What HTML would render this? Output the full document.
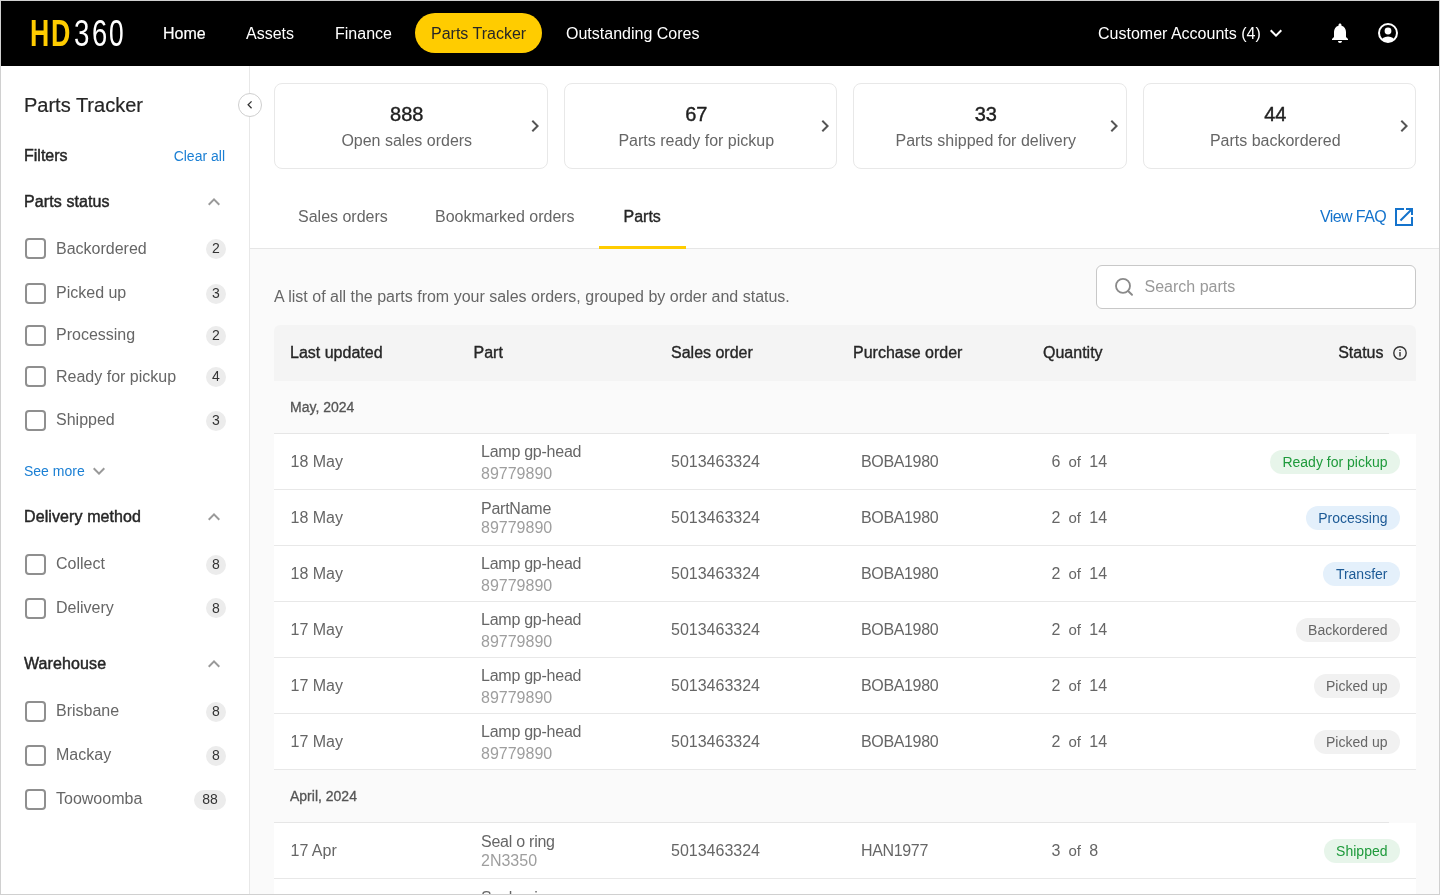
<!DOCTYPE html>
<html><head><meta charset="utf-8">
<style>
*{margin:0;padding:0;box-sizing:border-box}
html,body{width:1440px;height:895px;overflow:hidden;background:#fff}
body{font-family:"Liberation Sans", sans-serif;position:relative}
.a{position:absolute}
.t{position:absolute;white-space:nowrap;line-height:1}
#root{position:absolute;left:0;top:0;width:1440px;height:895px;will-change:transform}
.pill{position:absolute;right:40px;height:24px;line-height:24px;border-radius:12px;padding:0 12.5px;font-size:14px;white-space:nowrap}
</style></head><body><div id="root">
<div class="a" style="left:0px;top:0px;width:1440px;height:895px;background:#fff;"></div>
<div class="a" style="left:250px;top:249px;width:1190px;height:646px;background:#fafafa;"></div>
<div class="a" style="left:0px;top:0px;width:1440px;height:66px;background:#000;"></div>
<div class="a" style="left:249px;top:66px;width:1px;height:829px;background:#e8e8e8;"></div>
<div class="a" style="left:250px;top:248px;width:1190px;height:1px;background:#e6e6e6;"></div>
<div class="t" style="left:30.2px;top:16px;font-size:36px;font-weight:bold;color:#ffcc00;transform:scaleX(0.74);transform-origin:0 0">H</div>
<div class="t" style="left:51.4px;top:16px;font-size:36px;font-weight:bold;color:#ffcc00;transform:scaleX(0.745);transform-origin:0 0">D</div>
<div class="t" style="left:73.5px;top:16px;font-size:36px;font-weight:normal;color:#fff;transform:scaleX(0.77);transform-origin:0 0">3</div>
<div class="t" style="left:91.5px;top:16px;font-size:36px;font-weight:normal;color:#fff;transform:scaleX(0.76);transform-origin:0 0">6</div>
<div class="t" style="left:109px;top:16px;font-size:36px;font-weight:normal;color:#fff;transform:scaleX(0.73);transform-origin:0 0">0</div>
<div class="t" style="left:163px;top:26px;font-size:16px;color:#fff;-webkit-text-stroke:0.2px #fff;">Home</div>
<div class="t" style="left:246px;top:26px;font-size:16px;color:#fff;">Assets</div>
<div class="t" style="left:335px;top:26px;font-size:16px;color:#fff;">Finance</div>
<div class="a" style="left:415px;top:13px;width:127px;height:40px;background:#ffcc00;border-radius:20px;"></div>
<div class="t" style="left:431px;top:26px;font-size:16px;color:#262626;">Parts Tracker</div>
<div class="t" style="left:566px;top:26px;font-size:16px;color:#fff;">Outstanding Cores</div>
<div class="t" style="left:1098px;top:26px;font-size:16px;color:#fff;">Customer Accounts (4)</div>
<svg class="a" style="left:1264px;top:21px" width="24" height="24" viewBox="0 0 24 24"><path d="M7.41 8.59 12 13.17l4.59-4.58L18 10l-6 6-6-6z" fill="#fff"/></svg>
<svg class="a" style="left:1328px;top:21px" width="24" height="24" viewBox="0 0 24 24"><path fill="#fff" d="M12 22c1.1 0 2-.9 2-2h-4c0 1.1.89 2 2 2zm6-6v-5c0-3.07-1.64-5.64-4.5-6.32V4c0-.83-.67-1.5-1.5-1.5s-1.5.67-1.5 1.5v.68C7.63 5.36 6 7.92 6 11v5l-2 2v1h16v-1l-2-2z"/></svg>
<svg class="a" style="left:1376px;top:21px" width="24" height="24" viewBox="0 0 24 24"><defs><clipPath id="cc"><circle cx="12" cy="12" r="9"/></clipPath></defs><circle cx="12" cy="12" r="9" fill="none" stroke="#fff" stroke-width="2"/><circle cx="12" cy="10" r="3.4" fill="#fff"/><ellipse cx="12" cy="21" rx="7.2" ry="5.5" fill="#fff" clip-path="url(#cc)"/></svg>
<div class="t" style="left:24px;top:95px;font-size:20px;color:#262626;-webkit-text-stroke:0.2px #262626;">Parts Tracker</div>
<div class="t" style="left:24px;top:148px;font-size:16px;color:#262626;-webkit-text-stroke:0.45px #262626;">Filters</div>
<div class="t" style="right:1215px;top:149px;font-size:14px;color:#1a7fd4;">Clear all</div>
<div class="t" style="left:24px;top:194px;font-size:16px;color:#262626;-webkit-text-stroke:0.45px #262626;letter-spacing:0.1px;">Parts status</div>
<svg class="a" style="left:202px;top:189.9px" width="24" height="24" viewBox="0 0 24 24"><path d="M7.41 15.41 12 10.83l4.59 4.58L18 14l-6-6-6 6z" fill="#999"/></svg>
<div class="a" style="left:25px;top:238px;width:21px;height:21px;border:2px solid #8f8f8f;border-radius:4px;box-sizing:border-box;"></div>
<div class="t" style="left:56px;top:241px;font-size:16px;color:#666;">Backordered</div>
<div class="a" style="left:206px;top:238.5px;width:20px;height:20px;background:#ececec;border-radius:10px;"></div>
<div class="t" style="left:-84.0px;width:600px;text-align:center;top:241px;font-size:14px;color:#333;">2</div>
<div class="a" style="left:25px;top:283px;width:21px;height:21px;border:2px solid #8f8f8f;border-radius:4px;box-sizing:border-box;"></div>
<div class="t" style="left:56px;top:285px;font-size:16px;color:#666;">Picked up</div>
<div class="a" style="left:206px;top:283.5px;width:20px;height:20px;background:#ececec;border-radius:10px;"></div>
<div class="t" style="left:-84.0px;width:600px;text-align:center;top:286px;font-size:14px;color:#333;">3</div>
<div class="a" style="left:25px;top:325px;width:21px;height:21px;border:2px solid #8f8f8f;border-radius:4px;box-sizing:border-box;"></div>
<div class="t" style="left:56px;top:327px;font-size:16px;color:#666;">Processing</div>
<div class="a" style="left:206px;top:325.5px;width:20px;height:20px;background:#ececec;border-radius:10px;"></div>
<div class="t" style="left:-84.0px;width:600px;text-align:center;top:328px;font-size:14px;color:#333;">2</div>
<div class="a" style="left:25px;top:366px;width:21px;height:21px;border:2px solid #8f8f8f;border-radius:4px;box-sizing:border-box;"></div>
<div class="t" style="left:56px;top:369px;font-size:16px;color:#666;">Ready for pickup</div>
<div class="a" style="left:206px;top:366.5px;width:20px;height:20px;background:#ececec;border-radius:10px;"></div>
<div class="t" style="left:-84.0px;width:600px;text-align:center;top:369px;font-size:14px;color:#333;">4</div>
<div class="a" style="left:25px;top:410px;width:21px;height:21px;border:2px solid #8f8f8f;border-radius:4px;box-sizing:border-box;"></div>
<div class="t" style="left:56px;top:412px;font-size:16px;color:#666;">Shipped</div>
<div class="a" style="left:206px;top:410.5px;width:20px;height:20px;background:#ececec;border-radius:10px;"></div>
<div class="t" style="left:-84.0px;width:600px;text-align:center;top:413px;font-size:14px;color:#333;">3</div>
<div class="t" style="left:24px;top:464px;font-size:14px;color:#1a7fd4;">See more</div>
<svg class="a" style="left:87px;top:459px" width="24" height="24" viewBox="0 0 24 24"><path d="M7.41 8.59 12 13.17l4.59-4.58L18 10l-6 6-6-6z" fill="#999"/></svg>
<div class="t" style="left:24px;top:509px;font-size:16px;color:#262626;-webkit-text-stroke:0.45px #262626;letter-spacing:0.1px;">Delivery method</div>
<svg class="a" style="left:202px;top:504.9px" width="24" height="24" viewBox="0 0 24 24"><path d="M7.41 15.41 12 10.83l4.59 4.58L18 14l-6-6-6 6z" fill="#999"/></svg>
<div class="a" style="left:25px;top:554px;width:21px;height:21px;border:2px solid #8f8f8f;border-radius:4px;box-sizing:border-box;"></div>
<div class="t" style="left:56px;top:556px;font-size:16px;color:#666;">Collect</div>
<div class="a" style="left:206px;top:554.5px;width:20px;height:20px;background:#ececec;border-radius:10px;"></div>
<div class="t" style="left:-84.0px;width:600px;text-align:center;top:557px;font-size:14px;color:#333;">8</div>
<div class="a" style="left:25px;top:597.5px;width:21px;height:21px;border:2px solid #8f8f8f;border-radius:4px;box-sizing:border-box;"></div>
<div class="t" style="left:56px;top:600px;font-size:16px;color:#666;">Delivery</div>
<div class="a" style="left:206px;top:598.0px;width:20px;height:20px;background:#ececec;border-radius:10px;"></div>
<div class="t" style="left:-84.0px;width:600px;text-align:center;top:601px;font-size:14px;color:#333;">8</div>
<div class="t" style="left:24px;top:656px;font-size:16px;color:#262626;-webkit-text-stroke:0.45px #262626;letter-spacing:0.1px;">Warehouse</div>
<svg class="a" style="left:202px;top:652.1px" width="24" height="24" viewBox="0 0 24 24"><path d="M7.41 15.41 12 10.83l4.59 4.58L18 14l-6-6-6 6z" fill="#999"/></svg>
<div class="a" style="left:25px;top:701px;width:21px;height:21px;border:2px solid #8f8f8f;border-radius:4px;box-sizing:border-box;"></div>
<div class="t" style="left:56px;top:703px;font-size:16px;color:#666;">Brisbane</div>
<div class="a" style="left:206px;top:701.5px;width:20px;height:20px;background:#ececec;border-radius:10px;"></div>
<div class="t" style="left:-84.0px;width:600px;text-align:center;top:704px;font-size:14px;color:#333;">8</div>
<div class="a" style="left:25px;top:745px;width:21px;height:21px;border:2px solid #8f8f8f;border-radius:4px;box-sizing:border-box;"></div>
<div class="t" style="left:56px;top:747px;font-size:16px;color:#666;">Mackay</div>
<div class="a" style="left:206px;top:745.5px;width:20px;height:20px;background:#ececec;border-radius:10px;"></div>
<div class="t" style="left:-84.0px;width:600px;text-align:center;top:748px;font-size:14px;color:#333;">8</div>
<div class="a" style="left:25px;top:789px;width:21px;height:21px;border:2px solid #8f8f8f;border-radius:4px;box-sizing:border-box;"></div>
<div class="t" style="left:56px;top:791px;font-size:16px;color:#666;">Toowoomba</div>
<div class="a" style="left:194px;top:789.5px;width:32px;height:20px;background:#ececec;border-radius:10px;"></div>
<div class="t" style="left:-90.0px;width:600px;text-align:center;top:792px;font-size:14px;color:#333;">88</div>
<div class="a" style="left:238px;top:93px;width:24px;height:24px;background:#fff;border:1px solid #cfcfcf;border-radius:50%;box-sizing:border-box;"></div>
<svg class="a" style="left:242.4px;top:97.3px" width="15.6" height="15.6" viewBox="0 0 24 24"><path d="M15.41 7.41 14 6l-6 6 6 6 1.41-1.41L10.83 12z" fill="#333"/></svg>
<div class="a" style="left:274px;top:83px;width:273.5px;height:86px;border:1px solid #e8e8e8;border-radius:8px;background:#fff;box-sizing:border-box;"></div>
<div class="t" style="left:106.75px;width:600px;text-align:center;top:104px;font-size:20px;color:#1f1f1f;-webkit-text-stroke:0.4px #1f1f1f;">888</div>
<div class="t" style="left:106.75px;width:600px;text-align:center;top:133px;font-size:16px;color:#666;">Open sales orders</div>
<svg class="a" style="left:523.0px;top:113.5px" width="24" height="24" viewBox="0 0 24 24"><path d="M10 6 8.59 7.41 13.17 12l-4.58 4.59L10 18l6-6z" fill="#555"/></svg>
<div class="a" style="left:563.5px;top:83px;width:273.5px;height:86px;border:1px solid #e8e8e8;border-radius:8px;background:#fff;box-sizing:border-box;"></div>
<div class="t" style="left:396.25px;width:600px;text-align:center;top:104px;font-size:20px;color:#1f1f1f;-webkit-text-stroke:0.4px #1f1f1f;">67</div>
<div class="t" style="left:396.25px;width:600px;text-align:center;top:133px;font-size:16px;color:#666;">Parts ready for pickup</div>
<svg class="a" style="left:812.5px;top:113.5px" width="24" height="24" viewBox="0 0 24 24"><path d="M10 6 8.59 7.41 13.17 12l-4.58 4.59L10 18l6-6z" fill="#555"/></svg>
<div class="a" style="left:853px;top:83px;width:273.5px;height:86px;border:1px solid #e8e8e8;border-radius:8px;background:#fff;box-sizing:border-box;"></div>
<div class="t" style="left:685.75px;width:600px;text-align:center;top:104px;font-size:20px;color:#1f1f1f;-webkit-text-stroke:0.4px #1f1f1f;">33</div>
<div class="t" style="left:685.75px;width:600px;text-align:center;top:133px;font-size:16px;color:#666;">Parts shipped for delivery</div>
<svg class="a" style="left:1102.0px;top:113.5px" width="24" height="24" viewBox="0 0 24 24"><path d="M10 6 8.59 7.41 13.17 12l-4.58 4.59L10 18l6-6z" fill="#555"/></svg>
<div class="a" style="left:1142.5px;top:83px;width:273.5px;height:86px;border:1px solid #e8e8e8;border-radius:8px;background:#fff;box-sizing:border-box;"></div>
<div class="t" style="left:975.25px;width:600px;text-align:center;top:104px;font-size:20px;color:#1f1f1f;-webkit-text-stroke:0.4px #1f1f1f;">44</div>
<div class="t" style="left:975.25px;width:600px;text-align:center;top:133px;font-size:16px;color:#666;">Parts backordered</div>
<svg class="a" style="left:1391.5px;top:113.5px" width="24" height="24" viewBox="0 0 24 24"><path d="M10 6 8.59 7.41 13.17 12l-4.58 4.59L10 18l6-6z" fill="#555"/></svg>
<div class="t" style="left:298px;top:209px;font-size:16px;color:#666;">Sales orders</div>
<div class="t" style="left:435px;top:209px;font-size:16px;color:#666;">Bookmarked orders</div>
<div class="t" style="left:623.5px;top:209px;font-size:16px;color:#262626;-webkit-text-stroke:0.35px #262626;">Parts</div>
<div class="a" style="left:599px;top:246px;width:87px;height:3px;background:#ffcc00;"></div>
<div class="t" style="left:1320px;top:209px;font-size:16px;color:#1473cc;letter-spacing:-0.6px;">View FAQ</div>
<svg class="a" style="left:1392px;top:205px" width="24" height="24" viewBox="0 0 24 24"><path fill="#1473cc" d="M19 19H5V5h7V3H3v18h18v-9h-2v7zM14 3v2h3.59l-9.83 9.83 1.41 1.41L19 6.41V10h2V3h-7z"/></svg>
<div class="t" style="left:274px;top:289px;font-size:16px;color:#666;">A list of all the parts from your sales orders, grouped by order and status.</div>
<div class="a" style="left:1096px;top:265px;width:320px;height:44px;background:#fff;border:1px solid #c8c8c8;border-radius:6px;box-sizing:border-box;"></div>
<svg class="a" style="left:1112px;top:275px" width="24" height="24" viewBox="0 0 24 24"><circle cx="11" cy="10.9" r="7" fill="none" stroke="#8a8a8a" stroke-width="1.8"/><path d="M16.1 16 20 19.8" stroke="#8a8a8a" stroke-width="1.9" stroke-linecap="round"/></svg>
<div class="t" style="left:1144.5px;top:279px;font-size:16px;color:#999;">Search parts</div>
<div class="a" style="left:274px;top:325px;width:1142px;height:56px;background:#f4f4f4;border-radius:6px 6px 0 0;"></div>
<div class="t" style="left:290px;top:345px;font-size:16px;color:#262626;-webkit-text-stroke:0.35px #262626;">Last updated</div>
<div class="t" style="left:473.5px;top:345px;font-size:16px;color:#262626;-webkit-text-stroke:0.35px #262626;">Part</div>
<div class="t" style="left:671px;top:345px;font-size:16px;color:#262626;-webkit-text-stroke:0.35px #262626;">Sales order</div>
<div class="t" style="left:853px;top:345px;font-size:16px;color:#262626;-webkit-text-stroke:0.35px #262626;">Purchase order</div>
<div class="t" style="left:1043px;top:345px;font-size:16px;color:#262626;-webkit-text-stroke:0.35px #262626;">Quantity</div>
<div class="t" style="right:56.5px;top:345px;font-size:16px;color:#262626;-webkit-text-stroke:0.35px #262626;">Status</div>
<svg class="a" style="left:1392px;top:345px" width="16" height="16" viewBox="0 0 16 16"><circle cx="8" cy="8" r="6.2" fill="none" stroke="#333" stroke-width="1.4"/><rect x="7.3" y="7" width="1.4" height="4.5" fill="#333"/><rect x="7.3" y="4.6" width="1.4" height="1.4" fill="#333"/></svg>
<div class="t" style="left:290px;top:400px;font-size:14px;color:#555;-webkit-text-stroke:0.3px #555;">May, 2024</div>
<div class="a" style="left:274px;top:433px;width:1115px;height:1px;background:#e6e6e6;"></div>
<div class="a" style="left:274px;top:434px;width:1142px;height:55px;background:#fff;"></div>
<div class="a" style="left:274px;top:489px;width:1142px;height:1px;background:#e8e8e8;"></div>
<div class="t" style="left:290.5px;top:454px;font-size:16px;color:#666;">18 May</div>
<div class="t" style="left:481px;top:444px;font-size:16px;color:#666;letter-spacing:-0.25px;">Lamp gp-head</div>
<div class="t" style="left:481px;top:466px;font-size:16px;color:#9e9e9e;">89779890</div>
<div class="t" style="left:671px;top:454px;font-size:16px;color:#666;">5013463324</div>
<div class="t" style="left:861px;top:454px;font-size:16px;color:#666;letter-spacing:-0.35px;">BOBA1980</div>
<div class="t" style="left:1051.5px;top:454px;font-size:16px;color:#666;">6</div>
<div class="t" style="left:1068.5px;top:454px;font-size:15px;color:#666;">of</div>
<div class="t" style="left:1089.3px;top:454px;font-size:16px;color:#666;">14</div>
<div class="pill" style="top:450px;background:#e7f5ea;color:#1e9a3b">Ready for pickup</div>
<div class="a" style="left:274px;top:490px;width:1142px;height:55px;background:#fff;"></div>
<div class="a" style="left:274px;top:545px;width:1142px;height:1px;background:#e8e8e8;"></div>
<div class="t" style="left:290.5px;top:510px;font-size:16px;color:#666;">18 May</div>
<div class="t" style="left:481px;top:501px;font-size:16px;color:#666;letter-spacing:-0.25px;">PartName</div>
<div class="t" style="left:481px;top:520px;font-size:16px;color:#9e9e9e;">89779890</div>
<div class="t" style="left:671px;top:510px;font-size:16px;color:#666;">5013463324</div>
<div class="t" style="left:861px;top:510px;font-size:16px;color:#666;letter-spacing:-0.35px;">BOBA1980</div>
<div class="t" style="left:1051.5px;top:510px;font-size:16px;color:#666;">2</div>
<div class="t" style="left:1068.5px;top:510px;font-size:15px;color:#666;">of</div>
<div class="t" style="left:1089.3px;top:510px;font-size:16px;color:#666;">14</div>
<div class="pill" style="top:506px;background:#e4f0fb;color:#1d5a96">Processing</div>
<div class="a" style="left:274px;top:546px;width:1142px;height:55px;background:#fff;"></div>
<div class="a" style="left:274px;top:601px;width:1142px;height:1px;background:#e8e8e8;"></div>
<div class="t" style="left:290.5px;top:566px;font-size:16px;color:#666;">18 May</div>
<div class="t" style="left:481px;top:556px;font-size:16px;color:#666;letter-spacing:-0.25px;">Lamp gp-head</div>
<div class="t" style="left:481px;top:578px;font-size:16px;color:#9e9e9e;">89779890</div>
<div class="t" style="left:671px;top:566px;font-size:16px;color:#666;">5013463324</div>
<div class="t" style="left:861px;top:566px;font-size:16px;color:#666;letter-spacing:-0.35px;">BOBA1980</div>
<div class="t" style="left:1051.5px;top:566px;font-size:16px;color:#666;">2</div>
<div class="t" style="left:1068.5px;top:566px;font-size:15px;color:#666;">of</div>
<div class="t" style="left:1089.3px;top:566px;font-size:16px;color:#666;">14</div>
<div class="pill" style="top:562px;background:#e4f0fb;color:#1d5a96">Transfer</div>
<div class="a" style="left:274px;top:602px;width:1142px;height:55px;background:#fff;"></div>
<div class="a" style="left:274px;top:657px;width:1142px;height:1px;background:#e8e8e8;"></div>
<div class="t" style="left:290.5px;top:622px;font-size:16px;color:#666;">17 May</div>
<div class="t" style="left:481px;top:612px;font-size:16px;color:#666;letter-spacing:-0.25px;">Lamp gp-head</div>
<div class="t" style="left:481px;top:634px;font-size:16px;color:#9e9e9e;">89779890</div>
<div class="t" style="left:671px;top:622px;font-size:16px;color:#666;">5013463324</div>
<div class="t" style="left:861px;top:622px;font-size:16px;color:#666;letter-spacing:-0.35px;">BOBA1980</div>
<div class="t" style="left:1051.5px;top:622px;font-size:16px;color:#666;">2</div>
<div class="t" style="left:1068.5px;top:622px;font-size:15px;color:#666;">of</div>
<div class="t" style="left:1089.3px;top:622px;font-size:16px;color:#666;">14</div>
<div class="pill" style="top:618px;background:#f1f1f1;color:#666">Backordered</div>
<div class="a" style="left:274px;top:658px;width:1142px;height:55px;background:#fff;"></div>
<div class="a" style="left:274px;top:713px;width:1142px;height:1px;background:#e8e8e8;"></div>
<div class="t" style="left:290.5px;top:678px;font-size:16px;color:#666;">17 May</div>
<div class="t" style="left:481px;top:668px;font-size:16px;color:#666;letter-spacing:-0.25px;">Lamp gp-head</div>
<div class="t" style="left:481px;top:690px;font-size:16px;color:#9e9e9e;">89779890</div>
<div class="t" style="left:671px;top:678px;font-size:16px;color:#666;">5013463324</div>
<div class="t" style="left:861px;top:678px;font-size:16px;color:#666;letter-spacing:-0.35px;">BOBA1980</div>
<div class="t" style="left:1051.5px;top:678px;font-size:16px;color:#666;">2</div>
<div class="t" style="left:1068.5px;top:678px;font-size:15px;color:#666;">of</div>
<div class="t" style="left:1089.3px;top:678px;font-size:16px;color:#666;">14</div>
<div class="pill" style="top:674px;background:#f1f1f1;color:#666">Picked up</div>
<div class="a" style="left:274px;top:714px;width:1142px;height:55px;background:#fff;"></div>
<div class="a" style="left:274px;top:769px;width:1142px;height:1px;background:#e8e8e8;"></div>
<div class="t" style="left:290.5px;top:734px;font-size:16px;color:#666;">17 May</div>
<div class="t" style="left:481px;top:724px;font-size:16px;color:#666;letter-spacing:-0.25px;">Lamp gp-head</div>
<div class="t" style="left:481px;top:746px;font-size:16px;color:#9e9e9e;">89779890</div>
<div class="t" style="left:671px;top:734px;font-size:16px;color:#666;">5013463324</div>
<div class="t" style="left:861px;top:734px;font-size:16px;color:#666;letter-spacing:-0.35px;">BOBA1980</div>
<div class="t" style="left:1051.5px;top:734px;font-size:16px;color:#666;">2</div>
<div class="t" style="left:1068.5px;top:734px;font-size:15px;color:#666;">of</div>
<div class="t" style="left:1089.3px;top:734px;font-size:16px;color:#666;">14</div>
<div class="pill" style="top:730px;background:#f1f1f1;color:#666">Picked up</div>
<div class="t" style="left:290px;top:789px;font-size:14px;color:#555;-webkit-text-stroke:0.3px #555;">April, 2024</div>
<div class="a" style="left:274px;top:822px;width:1115px;height:1px;background:#e6e6e6;"></div>
<div class="a" style="left:274px;top:823px;width:1142px;height:55px;background:#fff;"></div>
<div class="a" style="left:274px;top:878px;width:1142px;height:1px;background:#e8e8e8;"></div>
<div class="t" style="left:290.5px;top:843px;font-size:16px;color:#666;">17 Apr</div>
<div class="t" style="left:481px;top:834px;font-size:16px;color:#666;letter-spacing:-0.25px;">Seal o ring</div>
<div class="t" style="left:481px;top:853px;font-size:16px;color:#9e9e9e;">2N3350</div>
<div class="t" style="left:671px;top:843px;font-size:16px;color:#666;">5013463324</div>
<div class="t" style="left:861px;top:843px;font-size:16px;color:#666;letter-spacing:-0.35px;">HAN1977</div>
<div class="t" style="left:1051.5px;top:843px;font-size:16px;color:#666;">3</div>
<div class="t" style="left:1068.5px;top:843px;font-size:15px;color:#666;">of</div>
<div class="t" style="left:1089.3px;top:843px;font-size:16px;color:#666;">8</div>
<div class="pill" style="top:839px;background:#e7f5ea;color:#1e9a3b">Shipped</div>
<div class="a" style="left:274px;top:879px;width:1142px;height:55px;background:#fff;"></div>
<div class="a" style="left:274px;top:934px;width:1142px;height:1px;background:#e8e8e8;"></div>
<div class="t" style="left:290.5px;top:899px;font-size:16px;color:#666;">17 Apr</div>
<div class="t" style="left:481px;top:890px;font-size:16px;color:#666;letter-spacing:-0.25px;">Seal o ring</div>
<div class="t" style="left:481px;top:909px;font-size:16px;color:#9e9e9e;">2N3350</div>
<div class="t" style="left:671px;top:899px;font-size:16px;color:#666;">5013463324</div>
<div class="t" style="left:861px;top:899px;font-size:16px;color:#666;letter-spacing:-0.35px;">HAN1977</div>
<div class="t" style="left:1051.5px;top:899px;font-size:16px;color:#666;">3</div>
<div class="t" style="left:1068.5px;top:899px;font-size:15px;color:#666;">of</div>
<div class="t" style="left:1089.3px;top:899px;font-size:16px;color:#666;">8</div>
<div class="pill" style="top:895px;background:#e7f5ea;color:#1e9a3b">Shipped</div>
<div class="a" style="left:0px;top:0px;width:1440px;height:895px;border:1px solid #d0d0d0;box-sizing:border-box;background:transparent;"></div>
</div></body></html>
